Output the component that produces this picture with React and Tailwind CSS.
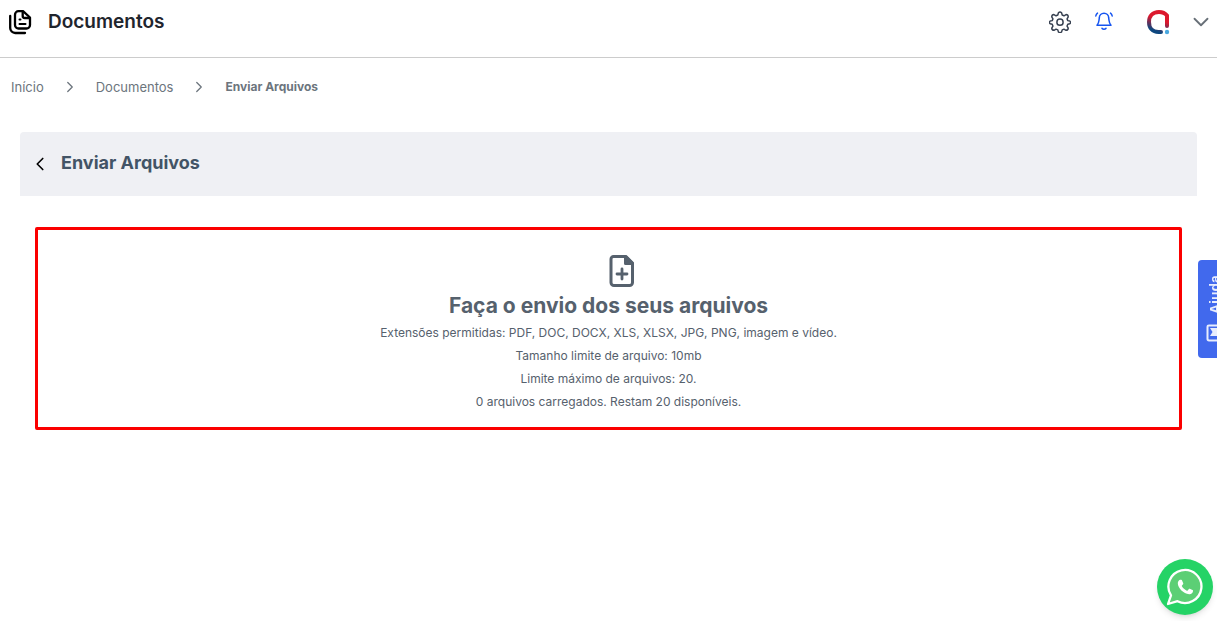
import { ChevronDown, ChevronLeft, ChevronRight } from "lucide-react";

const breadcrumbs = ["Início", "Documentos"];

const uploadRules = [
  "Extensões permitidas: PDF, DOC, DOCX, XLS, XLSX, JPG, PNG, imagem e vídeo.",
  "Tamanho limite de arquivo: 10mb",
  "Limite máximo de arquivos: 20.",
  "0 arquivos carregados. Restam 20 disponíveis.",
];

const DocumentsIcon = () => (
  <svg viewBox="0 0 24 26" className="h-[26px] w-6" fill="none" stroke="#000" strokeWidth="2.300" strokeLinecap="round" strokeLinejoin="round" aria-hidden="true">
    <path d="M2.200 7v12a5 5 0 0 0 5 5H17" />
    <path d="M10.500 2.200H15l7 6.300v7.500a3.500 3.500 0 0 1-3.500 3.500h-8a3.500 3.500 0 0 1-3.500-3.500V5.700a3.500 3.500 0 0 1 3.500-3.500z" />
    <path d="M14.700 2.700v4.300a2 2 0 0 0 2 2h4.500" />
    <path d="M11.500 10.500h1M11.500 15h6" strokeWidth="2" />
  </svg>
);

const GearIcon = () => (
  <svg viewBox="0 0 24 24" className="size-[22px]" fill="none" stroke="#374151" strokeWidth="1.600" strokeLinejoin="round" aria-hidden="true">
    <path d="M10.300 1.900Q12 .2 13.700 1.900l.7 2.500 1.900.8 2.300-1.300q2.300 0 2.400 2.400l-1.300 2.300.8 1.900 2.200.4q1.700 1.300 0 3l-2.200.6-.8 1.900 1.300 2.300q-.1 2.300-2.400 2.400l-2.300-1.300-1.900.8-.7 2.300q-1.700 1.400-3.400 0l-.7-2.300-1.900-.8-2.300 1.300q-2.300-.1-2.400-2.400l1.300-2.300-.8-1.900-2.200-.6q-1.700-1.700 0-3l2.200-.4.8-1.900L3 6.300q.1-2.300 2.400-2.400l2.300 1.300 1.900-.8z" />
    <circle cx="12" cy="12.200" r="3.400" />
  </svg>
);

const BellIcon = () => (
  <svg viewBox="0 0 20 20" className="size-5" fill="none" stroke="#1554f0" strokeWidth="1.500" strokeLinecap="round" strokeLinejoin="round" aria-hidden="true">
    <path d="M3 14.300h14c-1.400-1.500-1.800-3-2-5l-.3-2.400a4.700 4.700 0 0 0-9.400 0L5 9.300c-.2 2-.6 3.500-2 5z" />
    <path d="M8 17.400c1 1 3 1 4 0M1.800 5c.2-1.300.8-2.200 1.700-2.900M18.200 5c-.2-1.300-.8-2.200-1.700-2.900" />
  </svg>
);

const AccountLogo = () => (
  <svg viewBox="0 0 24 26" className="h-[26px] w-6" fill="none" aria-hidden="true">
    <defs>
      <linearGradient id="account-ring" x1="16" y1="3" x2="8" y2="25" gradientUnits="userSpaceOnUse">
        <stop offset="0.350" stopColor="#dc182d" />
        <stop offset="0.620" stopColor="#65305a" />
        <stop offset="0.850" stopColor="#0d477f" />
      </linearGradient>
    </defs>
    <path d="M21 17V6.500C19 4 16 3 13 3 6.500 3 3 7.500 3 13c0 6 3.500 10 9.500 10H15" stroke="url(#account-ring)" strokeWidth="4" strokeLinecap="round" strokeLinejoin="round" />
    <circle cx="21" cy="23" r="2.200" fill="#4aa8df" />
  </svg>
);

const FilePlusIcon = () => (
  <svg viewBox="0 0 26 34" className="h-[34px] w-[26px]" fill="none" stroke="#56616d" strokeWidth="3" strokeLinecap="round" strokeLinejoin="round" aria-hidden="true">
    <path d="M4.500 2.500H17l6.500 6.500v19.500a3 3 0 0 1-3 3H5a3 3 0 0 1-3-3V5a2.500 2.500 0 0 1 2.500-2.500z" />
    <path d="M16.500 2.500V9.500h7z" fill="#56616d" />
    <path d="M13 15v10M8 20h10" strokeWidth="2.800" />
  </svg>
);

const WhatsAppIcon = () => (
  <svg viewBox="0 0 38 38" className="size-[38px]" aria-hidden="true">
    <path d="M2 36l3-8.700A16.500 16.500 0 1 1 11.500 33.200z" fill="#5ccf75" stroke="#fff" strokeWidth="2.300" strokeLinejoin="round" />
    <path d="M13.200 11.300h1.500c.6 0 .8.300 1 .8l1.400 3.300c.2.500.1.800-.2 1.200l-1.300 1.600c-.3.300-.3.600-.1 1 1.400 2.500 3.400 4.200 6 5.400.4.200.8.100 1-.2l1.500-1.900c.3-.4.700-.5 1.100-.3l3.300 1.600c.5.200.7.500.7.900-.1 2.800-2.300 4.300-4.800 4.100-7-.8-13.500-7.500-13.800-13.200-.1-1.900 1.100-3.600 2.700-4.300z" fill="#fff" transform="translate(3.200 2.600) scale(.82)" />
  </svg>
);

const Header = () => (
  <header className="flex h-[58px] items-start justify-between border-b border-[#cccccc] pt-2 pr-[3px] pl-2">
    <div className="flex items-center gap-4 text-[#1f252d]">
      <DocumentsIcon />
      <h1 className="text-[19px] leading-7 font-semibold">Documentos</h1>
    </div>
    <div className="flex h-7 items-center">
      <button type="button" aria-label="Configurações" className="mr-[23px]">
        <GearIcon />
      </button>
      <button type="button" aria-label="Notificações" className="mr-8 pb-0.5">
        <BellIcon />
      </button>
      <button type="button" aria-label="Conta" className="flex items-center gap-[18px]">
        <AccountLogo />
        <ChevronDown className="size-[26px] text-[#687078]" strokeWidth={1.7} />
      </button>
    </div>
  </header>
);

const Breadcrumb = () => (
  <nav aria-label="Breadcrumb" className="px-[11px] pt-[19px]">
    <ol className="flex items-center text-[13px] leading-5 text-[#6c757d]">
      {breadcrumbs.map((item) => (
        <li key={item} className="flex items-center">
          <a href="#">{item}</a>
          <ChevronRight className="mx-[17px] size-[18px]" strokeWidth={1.7} />
        </li>
      ))}
      <li aria-current="page" className="text-xs leading-5 font-bold">Enviar Arquivos</li>
    </ol>
  </nav>
);

const UploadArea = () => (
  <label className="mx-[35px] mt-[31px] flex cursor-pointer flex-col items-center rounded-xs border-3 border-[#fb0000] px-4 pt-6 pb-[14px] text-center text-[#56616d]">
    <input type="file" multiple className="sr-only" />
    <span className="pl-[26px]">
      <FilePlusIcon />
    </span>
    <span className="mt-1 mb-px text-[21px] leading-7 font-bold">Faça o envio dos seus arquivos</span>
    {uploadRules.map((rule) => (
      <span key={rule} className="text-xs leading-[23px]">{rule}</span>
    ))}
  </label>
);

export default function App() {
  return (
    <div className="min-h-screen bg-white font-[Inter,sans-serif]">
      <Header />
      <Breadcrumb />
      <main>
        <div className="mx-5 mt-[35px] flex h-16 items-center gap-[10px] rounded-t bg-[#eff0f4] px-[9px] pb-0.5">
          <button type="button" aria-label="Voltar" className="pt-0.5">
            <ChevronLeft className="size-[22px] text-black" strokeWidth={1.8} />
          </button>
          <h2 className="text-lg leading-7 font-bold text-[#425466]">Enviar Arquivos</h2>
        </div>
        <UploadArea />
      </main>

      {/* Help tab runs past the window edge */}
      <button
        type="button"
        className="fixed top-[260px] -right-3 flex h-[98px] w-[31px] rotate-180 items-center justify-center gap-[10px] rounded-r bg-[#4169ed] pr-1 font-['Liberation_Sans',sans-serif] text-sm leading-4 font-bold text-[#e8edfd] [writing-mode:vertical-rl]"
      >
        <svg viewBox="0 0 18 18" className="size-[18px] rotate-180" fill="none" stroke="currentColor" strokeWidth="2" aria-hidden="true">
          <rect x="1.500" y="1.500" width="15" height="15" rx="1.500" />
          <path d="M4 4h12v8H4l2.500-4z" fill="currentColor" stroke="none" />
        </svg>
        Ajuda
      </button>

      <a
        href="#"
        aria-label="WhatsApp"
        className="fixed right-1 bottom-1.5 flex size-14 items-center justify-center rounded-full bg-[#25d366] shadow-md shadow-black/10"
      >
        <WhatsAppIcon />
      </a>
    </div>
  );
}
